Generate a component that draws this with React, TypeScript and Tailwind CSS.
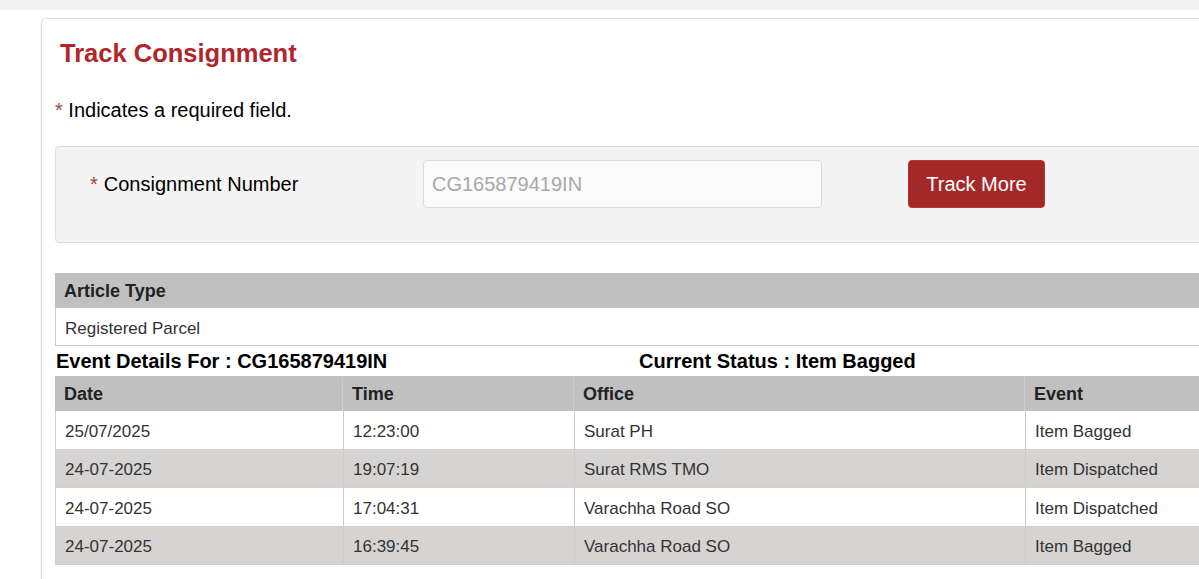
import React from 'react';

type TrackEvent = {
  date: string;
  time: string;
  office: string;
  event: string;
};

const events: TrackEvent[] = [
  { date: '25/07/2025', time: '12:23:00', office: 'Surat PH', event: 'Item Bagged' },
  { date: '24-07-2025', time: '19:07:19', office: 'Surat RMS TMO', event: 'Item Dispatched' },
  { date: '24-07-2025', time: '17:04:31', office: 'Varachha Road SO', event: 'Item Dispatched' },
  { date: '24-07-2025', time: '16:39:45', office: 'Varachha Road SO', event: 'Item Bagged' },
];

export default function App() {
  return (
    <div className="h-[579px] w-[1199px] overflow-hidden bg-white font-['Liberation_Sans',Arial,sans-serif]">
      {/* top strip */}
      <div className="h-[10px] bg-[#f4f4f4]" />

      <div className="pl-[41px] pt-[8px]">
        <div className="w-[1196px] min-h-[600px] rounded-tl-[5px] border-l border-t border-[#dedede] bg-white px-[13px] pt-[18px] shadow-[0_0_2px_rgba(0,0,0,0.08)]">
          {/* Title */}
          <h1 className="ml-[5px] h-[32px] text-[25.5px] font-bold leading-[32px] text-[#b0262b]">
            Track Consignment
          </h1>

          <p className="mt-[29px] h-[24px] text-[20px] leading-[24px] text-black">
            <span className="text-[#a94442]">*</span> Indicates a required field.
          </p>

          {/* Search form */}
          <div className="mt-[24px] flex h-[97px] w-[1168px] items-start rounded-[4px] border border-[#dddddd] bg-[#f4f4f4] pl-[34px] pt-[13px]">
            <label className="flex h-[48px] w-[333px] items-center text-[20px] text-black">
              <span className="mr-[6px] text-[#a94442]">*</span>
              Consignment Number
            </label>
            <input
              type="text"
              placeholder="CG165879419IN"
              className="h-[48px] w-[399px] rounded-[4px] border border-[#dcdcdc] bg-[#fbfbfb] pl-[8px] text-[20px] text-[#333] outline-none placeholder:text-[#a8a8a8]"
            />
            <button className="ml-[86px] h-[48px] w-[137px] rounded-[4px] border border-[#b83232] bg-[#a52828] text-[20px] text-white">
              Track More
            </button>
          </div>

          {/* Article type */}
          <div className="mt-[30px] w-[1168px]">
            <div className="flex h-[35px] items-center bg-[#c0c0c0] pl-[9px] pt-[1px] text-[18px] font-bold text-[#222]">
              Article Type
            </div>
            <div className="flex h-[38px] items-center border-b border-l border-[#cccccc] pl-[9px] pt-[4px] text-[17px] text-[#333]">
              Registered Parcel
            </div>
          </div>

          {/* Event heading */}
          <div className="flex h-[30px] w-[1168px] items-center text-[20px] font-bold text-black">
            <div className="w-1/2 pl-[1px]">Event Details For : CG165879419IN</div>
            <div className="w-1/2">Current Status : Item Bagged</div>
          </div>

          {/* Events table */}
          <div className="w-[1168px]">
            <div className="grid h-[35px] grid-cols-[288px_231px_451px_198px] bg-[#c0c0c0] pt-[1px] text-[18px] font-bold text-[#222]">
              <div className="flex items-center border-r border-[#cdcdcd] pl-[9px]">Date</div>
              <div className="flex items-center border-r border-[#cdcdcd] pl-[9px]">Time</div>
              <div className="flex items-center border-r border-[#cdcdcd] pl-[9px]">Office</div>
              <div className="flex items-center pl-[9px]">Event</div>
            </div>
            {events.map((ev, i) => (
              <div
                key={i}
                className={
                  'grid h-[38.5px] grid-cols-[288px_231px_451px_198px] border-b border-l border-[#d0d0d0] text-[17px] text-[#333] ' +
                  (i % 2 === 1 ? 'bg-[#d6d3d3]' : 'bg-white')
                }
              >
                <div className="flex items-center border-r border-[#cccccc] pl-[9px] pt-[3px]">{ev.date}</div>
                <div className="flex items-center border-r border-[#cccccc] pl-[9px] pt-[3px]">{ev.time}</div>
                <div className="flex items-center border-r border-[#cccccc] pl-[9px] pt-[3px]">{ev.office}</div>
                <div className="flex items-center pl-[9px] pt-[3px]">{ev.event}</div>
              </div>
            ))}
          </div>
        </div>
      </div>
    </div>
  );
}
